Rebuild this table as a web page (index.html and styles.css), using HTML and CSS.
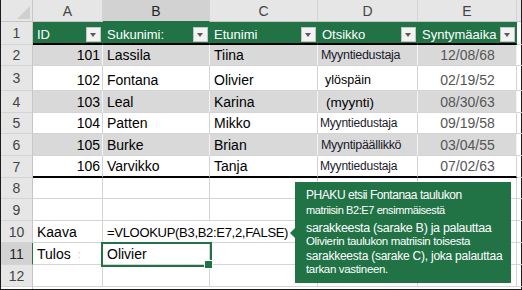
FILE: index.html
```html
<!DOCTYPE html>
<html lang="fi">
<head>
<meta charset="utf-8">
<title>PHAKU</title>
<link rel="stylesheet" href="styles.css">
</head>
<body>
<div class="wrap">
  <div class="sheet">
    <div class="corner"></div>
    <div class="ch">A</div>
    <div class="ch sel">B</div>
    <div class="ch">C</div>
    <div class="ch">D</div>
    <div class="ch">E</div>
    <div class="ch edge"></div>

    <div class="rh">1</div>
    <div class="c th"><span>ID</span><i class="dd"></i></div>
    <div class="c th"><span>Sukunimi:</span><i class="dd"></i></div>
    <div class="c th"><span>Etunimi</span><i class="dd"></i></div>
    <div class="c th"><span>Otsikko</span><i class="dd"></i></div>
    <div class="c th"><span>Syntymäaika</span><i class="dd"></i></div>
    <div class="c edge"></div>

    <div class="rh">2</div>
    <div class="c band num">101</div>
    <div class="c band">Lassila</div>
    <div class="c band">Tiina</div>
    <div class="c band dn dbig">Myyntiedustaja</div>
    <div class="c band date">12/08/68</div>
    <div class="c edge"></div>

    <div class="rh">3</div>
    <div class="c num">102</div>
    <div class="c">Fontana</div>
    <div class="c">Olivier</div>
    <div class="c dsmall">ylöspäin</div>
    <div class="c date">02/19/52</div>
    <div class="c edge"></div>

    <div class="rh">4</div>
    <div class="c band num">103</div>
    <div class="c band">Leal</div>
    <div class="c band">Karina</div>
    <div class="c band dmid">(myynti)</div>
    <div class="c band date">08/30/63</div>
    <div class="c edge"></div>

    <div class="rh">5</div>
    <div class="c num">104</div>
    <div class="c">Patten</div>
    <div class="c">Mikko</div>
    <div class="c dn">Myyntiedustaja</div>
    <div class="c date">09/19/58</div>
    <div class="c edge"></div>

    <div class="rh">6</div>
    <div class="c band num">105</div>
    <div class="c band">Burke</div>
    <div class="c band">Brian</div>
    <div class="c band dn dbig">Myyntipäällikkö</div>
    <div class="c band date">03/04/55</div>
    <div class="c edge"></div>

    <div class="rh">7</div>
    <div class="c last num">106</div>
    <div class="c last">Varvikko</div>
    <div class="c last">Tanja</div>
    <div class="c last dn">Myyntiedustaja</div>
    <div class="c last date">07/02/63</div>
    <div class="c edge"></div>

    <div class="rh">8</div>
    <div class="c"></div><div class="c"></div><div class="c"></div><div class="c"></div><div class="c"></div><div class="c edge"></div>

    <div class="rh">9</div>
    <div class="c"></div><div class="c"></div><div class="c"></div><div class="c"></div><div class="c"></div><div class="c edge"></div>

    <div class="rh">10</div>
    <div class="c">Kaava</div>
    <div class="c formula">=VLOOKUP(B3,B2:E7,2,FALSE)</div>
    <div class="c"></div><div class="c"></div><div class="c"></div><div class="c edge"></div>

    <div class="rh sel">11</div>
    <div class="c">Tulos<span class="colon">:</span></div>
    <div class="c active">Olivier</div>
    <div class="c"></div><div class="c"></div><div class="c"></div><div class="c edge"></div>

    <div class="rh">12</div>
    <div class="c"></div><div class="c"></div><div class="c"></div><div class="c"></div><div class="c"></div><div class="c edge"></div>

    <div class="rh rest"></div>
    <div class="rest"></div><div class="rest"></div><div class="rest"></div><div class="rest"></div><div class="rest"></div><div class="rest"></div>
  </div>

  <div class="tip">
    <div class="tl l1">PHAKU etsii Fontanaa taulukon</div>
    <div class="tl l2">matriisin B2:E7 ensimmäisestä</div>
    <div class="tl l3">sarakkeesta (sarake B) ja palauttaa</div>
    <div class="tl l4">Olivierin taulukon matriisin toisesta</div>
    <div class="tl l5">sarakkeesta (sarake C), joka palauttaa</div>
    <div class="tl l6">tarkan vastineen.</div>
  </div>
</div>
</body>
</html>
```

FILE: styles.css
```css
* { box-sizing: border-box; }

body {
  margin: 0;
  background: #fff;
  color: #000;
  font-family: "Liberation Sans", Arial, sans-serif;
  font-size: 14px;
}

.wrap {
  position: relative;
  width: 522px;
  height: 290px;
}

.sheet {
  display: grid;
  grid-template-columns: 32px 70px 107px 108px 100px 99px 4px;
  grid-template-rows: 22px 23px 21px 25px 22px 21px 22px 22px 21px 22px 22px 22px 22px 2px;
  width: 522px;
  height: 290px;
  border: 1px solid #1b1b1b;
  border-top: 0;
}

.corner {
  position: relative;
  background: #e6e6e6;
  border-right: 1px solid #c6c6c6;
  border-bottom: 1px solid #c6c6c6;
}

.corner::after {
  content: "";
  position: absolute;
  right: 2px;
  bottom: 2px;
  border-left: 13px solid transparent;
  border-bottom: 13px solid #cfcfcf;
}

.ch {
  display: flex;
  align-items: center;
  justify-content: center;
  background: #e6e6e6;
  border-right: 1px solid #d4d4d4;
  border-bottom: 1px solid #c6c6c6;
  color: #444;
  font-size: 14px;
}

.ch.sel {
  background: #d2d2d2;
  border-bottom-color: #217346;
  color: #262626;
}

.ch.edge {
  border-right: 0;
}

.rh {
  display: flex;
  align-items: center;
  justify-content: center;
  background: #e6e6e6;
  border-right: 1px solid #c6c6c6;
  border-bottom: 1px solid #d4d4d4;
  color: #444;
  font-size: 14px;
}

.rh.sel {
  background: #d2d2d2;
  border-right-color: #217346;
  color: #262626;
}

.rh.rest {
  border-bottom: 0;
}

.c {
  display: flex;
  align-items: flex-end;
  padding: 0 3px 1px 4px;
  border-right: 1px solid #d4d4d4;
  border-bottom: 1px solid #d4d4d4;
  white-space: nowrap;
  overflow: hidden;
  line-height: 17px;
}

.c.edge {
  border-right: 0;
}

.band {
  background: #d9d9d9;
  border-right-color: #f4f4f4;
}

.th {
  align-items: flex-end;
  padding: 0 1px 0 4px;
  background: #217346;
  border-right-color: #217346;
  border-bottom: 2px solid #000;
  color: #fff;
  font-size: 13px;
}

.dd {
  position: relative;
  flex: none;
  width: 15px;
  height: 15px;
  margin: 0 0 1px auto;
  background: #f3f3f3;
  border: 1px solid #c4c4c4;
}

.dd::after {
  content: "";
  position: absolute;
  left: 3px;
  top: 5px;
  border-left: 3.5px solid transparent;
  border-right: 3.5px solid transparent;
  border-top: 4px solid #5a5a5a;
}

.last {
  border-bottom: 2px solid #000;
}

.num {
  justify-content: flex-end;
  padding-right: 2px;
}

.date {
  justify-content: center;
  color: #555;
}

.dn {
  font-size: 12px;
  letter-spacing: -0.2px;
  padding-left: 2px;
  color: #1a1a2a;
}

.dn.dbig {
  font-size: 12.5px;
  letter-spacing: -0.3px;
  padding-left: 3px;
}

.dsmall {
  font-size: 12.5px;
  padding-left: 7px;
}

.dmid {
  font-size: 13.5px;
  padding-left: 8px;
}

.formula {
  overflow: visible;
  border-right-color: transparent;
  padding-left: 4px;
  font-size: 13px;
  letter-spacing: -0.3px;
}

.colon {
  margin-left: 7px;
  color: #a9cde8;
  font-size: 11px;
}

.active {
  position: relative;
  overflow: visible;
}

.active::after {
  content: "";
  position: absolute;
  left: -2px;
  top: -1px;
  right: -3px;
  bottom: -3px;
  border: 2px solid #217346;
}

.active::before {
  content: "";
  position: absolute;
  right: -4px;
  bottom: -5px;
  width: 7px;
  height: 7px;
  background: #217346;
  border: 1px solid #fff;
  z-index: 1;
}

.rest {
  background: #fff;
}

.tip {
  position: absolute;
  left: 295px;
  top: 182px;
  width: 216px;
  height: 101px;
  padding: 6px 0 0 11px;
  background: #217346;
  color: #fff;
  line-height: 15px;
  white-space: nowrap;
}

.tip::before {
  content: "";
  position: absolute;
  left: -7px;
  top: 44px;
  border-top: 7px solid transparent;
  border-bottom: 7px solid transparent;
  border-right: 7px solid #fff;
}

.tip::after {
  content: "";
  position: absolute;
  left: -5px;
  top: 46px;
  border-top: 5px solid transparent;
  border-bottom: 5px solid transparent;
  border-right: 5px solid #217346;
}

.l1 { font-size: 12px; letter-spacing: -0.45px; }
.l2 { font-size: 11px; letter-spacing: -0.4px; }
.l3 { font-size: 12.5px; letter-spacing: -0.32px; margin-top: 3px; }
.l4 { font-size: 11.5px; letter-spacing: -0.35px; margin-top: -2px; }
.l5 { font-size: 12px; letter-spacing: -0.24px; }
.l6 { font-size: 11.5px; letter-spacing: -0.33px; margin-top: -2px; }
```
